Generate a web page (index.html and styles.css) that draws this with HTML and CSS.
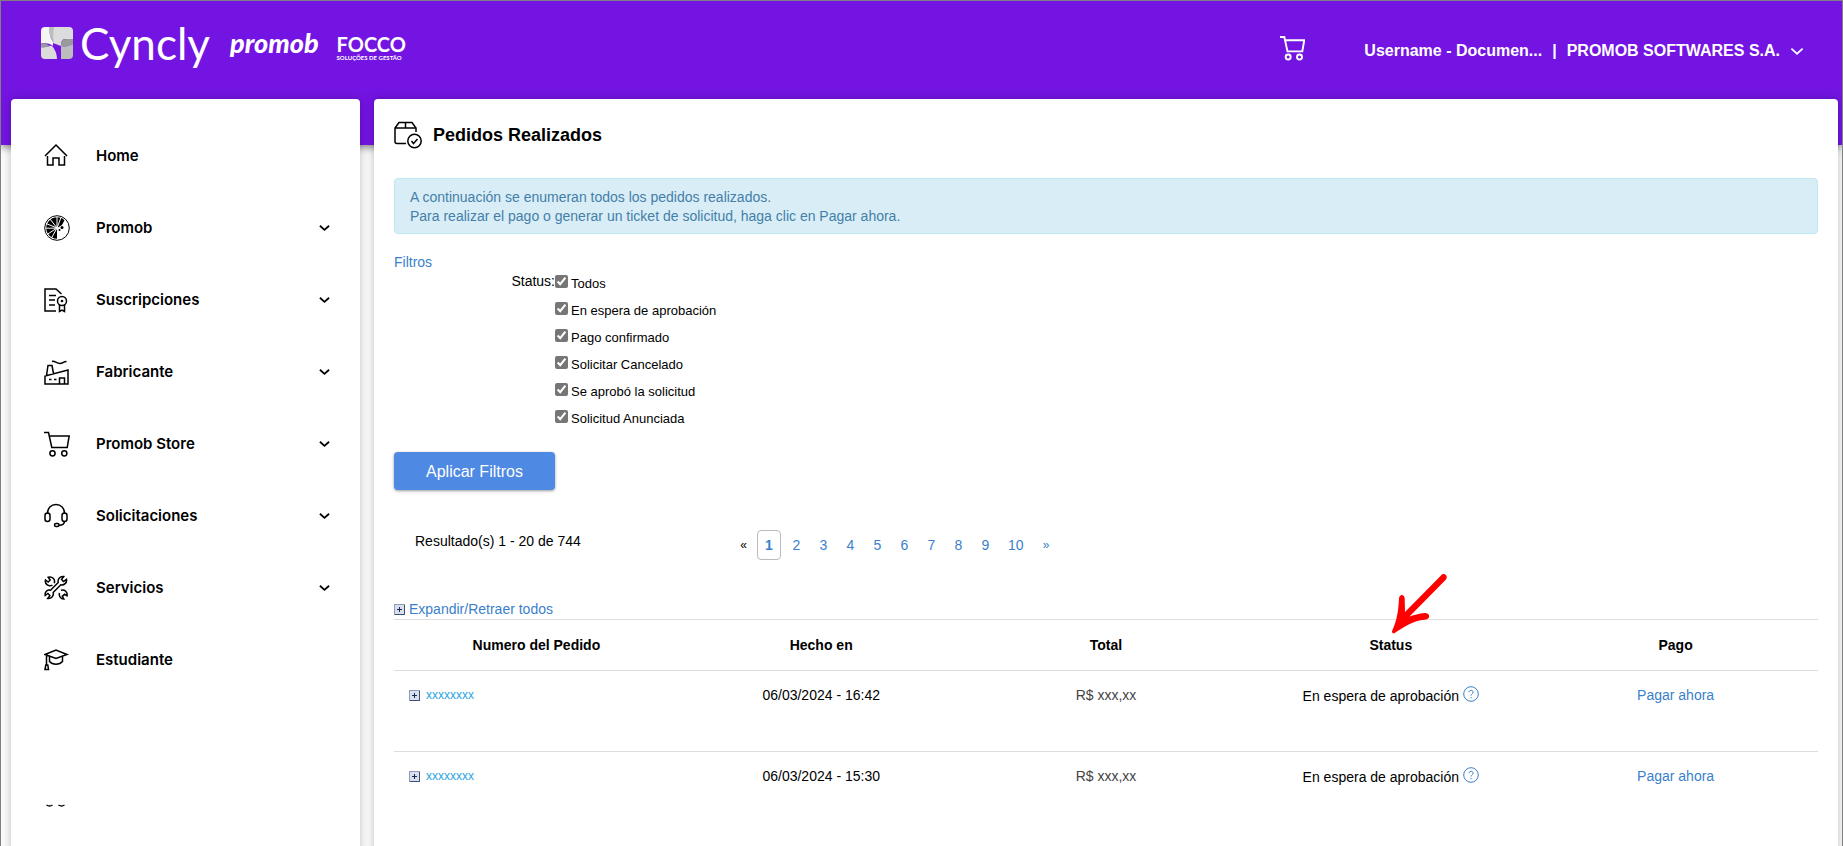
FILE: index.html
```
<!DOCTYPE html>
<html lang="es">
<head>
  <meta charset="UTF-8">
  <meta name="viewport" content="width=device-width, initial-scale=1">
  <title>Pedidos Realizados</title>
  <link rel="stylesheet" href="styles.css">
</head>
<body>
<svg class="sprite" width="0" height="0" aria-hidden="true">
  <symbol id="chevron" viewBox="0 0 12 8"><path d="M1 1.5l5 4.5 5-4.5"/></symbol>
  <symbol id="cart" viewBox="0 0 26 26"><path d="M0 1.5h4.5l3.3 15h15.4l2-11.5H5.5"/><circle cx="8.5" cy="22.3" r="2.6"/><circle cx="20.3" cy="22.3" r="2.6"/></symbol>
  <symbol id="plus" viewBox="0 0 11 11"><rect x=".5" y=".5" width="10" height="10" fill="#d9dfee" stroke="#8e9cb5"/><path d="M1 10.5h9.5V1" fill="none" stroke="#3f4f73"/><path d="M5.5 3v5M3 5.5h5" stroke="#1d2a4d"/></symbol>
  <symbol id="help" viewBox="0 0 16 16"><circle cx="8" cy="8" r="7.3"/><path d="M6 6.3c0-2.7 4.1-2.6 4.1-.1C10.100 7.700 8 7.800 8 9.600M8 11v1.200"/></symbol>
</svg>
<div class="page">
  <header class="header">
    <div class="brands">
      <a class="brand-cyncly" href="#">
        <svg class="mark" viewBox="0 0 32 32" aria-hidden="true">
          <path fill="#dcdcdc" d="M12 0H28a4 4 0 0 1 4 4v8h-8c-3 0-4 3-4 7l-8-3z"/>
          <path fill="#f5f5f5" d="M4 0h5c-1 6 0 11 3 15v4c-2-2-5-3-12-3V4a4 4 0 0 1 4-4z"/>
          <path fill="#bdbdbd" d="M8 0h5c-1 6-1 11 0 16-3-3-5-9-5-16z"/>
          <path fill="#9a9a9a" d="M20 19c0-4 1-7 5-7h7v5c-4 2-8 3-12 2zM0 16c4 0 6 1 9 3l-9 2z"/>
          <path fill="#dcdcdc" d="M0 20.500c3 0 6-.500 10.500-2 3 3 5.500 8 5.500 13.500H4a4 4 0 0 1-4-4z"/>
          <path fill="#bdbdbd" d="M20 19c4 1 8 0 12-2v11a4 4 0 0 1-4 4h-8z"/>
        </svg>
        <span>Cyncly</span>
      </a>
      <a class="brand-promob" href="#">promob</a>
      <a class="brand-focco" href="#">FOCCO<small>SOLUÇÕES DE GESTÃO</small></a>
    </div>
    <a class="header-cart" href="#" aria-label="Carrito"><svg><use href="#cart"/></svg></a>
    <button class="account" type="button">
      <span>Username - Documen...</span><span>|</span><span>PROMOB SOFTWARES S.A.</span>
      <svg aria-hidden="true"><use href="#chevron"/></svg>
    </button>
  </header>

  <div class="layout">
    <nav class="sidebar">
      <a class="item" href="#">
        <svg class="icon" viewBox="0 0 26 26"><path d="M1 13L12 2l11 11M3.500 13v9h5.500v-7h6v7h5.500v-9"/></svg>
        <span>Home</span>
      </a>
      <button class="item" type="button">
        <svg class="icon" viewBox="0 0 26 26"><circle cx="13" cy="13" r="12.300" stroke-width="1"/><path class="solid" d="M13 13V23.800A10.800 10.800 0 1 1 20.500 5.200L18 10z"/><path class="cut" d="M13 13V2M13 13L6 4M13 13L2 8.500M13 13.200H2M13 13L3 19.500M13 13L7.500 23M13 13L17 2.500"/><circle class="solid" cx="18" cy="12.500" r="1.500"/><circle class="solid" cx="15.500" cy="15" r="1"/></svg>
        <span>Promob</span><svg class="chevron"><use href="#chevron"/></svg>
      </button>
      <button class="item" type="button">
        <svg class="icon" viewBox="0 0 26 26"><path d="M12 24H1V2h11l5.500 5M5 8.500h7M5 13h6M5 18h6M15.500 18v6.500l2.500-1.500 2.500 1.500V18"/><circle cx="18" cy="14" r="4.500"/><circle cx="18" cy="14" r=".6"/></svg>
        <span>Suscripciones</span><svg class="chevron"><use href="#chevron"/></svg>
      </button>
      <button class="item" type="button">
        <svg class="icon" viewBox="0 0 26 26"><path d="M1 25v-8l23-6v14zM2.500 16.500L4 6.500h4l1.500 8M15.500 25v-6h5v6M5 20.500h2.500M10 20.500h2.500M8 2.500c3-1 4 2 8 2 3 0 3-2 6.500-2"/></svg>
        <span>Fabricante</span><svg class="chevron"><use href="#chevron"/></svg>
      </button>
      <button class="item" type="button">
        <svg class="icon"><use href="#cart"/></svg>
        <span>Promob Store</span><svg class="chevron"><use href="#chevron"/></svg>
      </button>
      <button class="item" type="button">
        <svg class="icon" viewBox="0 0 26 26"><path d="M3.500 10.500C3.500 5 7 1.500 12 1.500s8.500 3.500 8.500 9M20.500 18c0 3-2 4.300-5.500 4.300"/><rect x="1" y="10" width="5" height="8.500" rx="2.500"/><rect x="18" y="10" width="5" height="8.500" rx="2.500"/><rect x="10.500" y="20.500" width="4.500" height="3" rx="1.500"/></svg>
        <span>Solicitaciones</span><svg class="chevron"><use href="#chevron"/></svg>
      </button>
      <button class="item" type="button">
        <svg class="icon" viewBox="0 0 26 26"><path d="M8.500 10a4.600 4.600 0 0 1-7-5l2.700 2 2-2-2-2.700a4.600 4.600 0 0 1 6 6M15.500 18a4.600 4.600 0 0 0 4.300 6l-1.500-2.700 2.400-2 2.300 1.500a4.600 4.600 0 0 0-6-5.500M6.500 15.200l7.700-7.700c-.7-3.500 1.800-6.500 5.500-6l-2.200 3 2 2 3-2.200c.7 3.500-2.500 6.300-5.700 5.500l-7.600 7.700c.8 3.500-2 6.500-5.500 6l2.200-3-2-2-2.700 2c-.7-3.500 2-6 5.300-5.300z"/></svg>
        <span>Servicios</span><svg class="chevron"><use href="#chevron"/></svg>
      </button>
      <a class="item" href="#">
        <svg class="icon" viewBox="0 0 26 26"><path d="M1 7.500L12 3l11 4.500-11 4zM5.500 9.500v5c3 3.500 10 3.500 13 0v-5M2.500 8v10M1 22.500l.8-4.500h2l.7 4.500z"/></svg>
        <span>Estudiante</span>
      </a>
      <svg class="remnant" viewBox="0 0 26 4" aria-hidden="true"><path d="M2.500 1q3 2 6 0M14.500 1q3 2 6 0"/></svg>
    </nav>

    <main class="content">
      <h1 class="title">
        <svg class="icon" viewBox="0 0 28 28" aria-hidden="true"><path d="M12 22.500H3a2 2 0 0 1-2-2V7l4-5.500h13L22 7v4M1 7h21M11.500 1.500V7"/><circle cx="20.500" cy="20" r="6.700"/><path d="M17.500 20l2 2.500 4-4.500"/></svg>
        Pedidos Realizados
      </h1>
      <p class="alert">A continuación se enumeran todos los pedidos realizados.<br>Para realizar el pago o generar un ticket de solicitud, haga clic en Pagar ahora.</p>

      <a class="filters-link" href="#">Filtros</a>
      <form class="filters">
        <div class="status" role="group" aria-labelledby="status-label">
          <span class="status-label" id="status-label">Status:</span>
          <div class="options">
            <label><input type="checkbox" checked><span>Todos</span></label>
            <label><input type="checkbox" checked><span>En espera de aprobación</span></label>
            <label><input type="checkbox" checked><span>Pago confirmado</span></label>
            <label><input type="checkbox" checked><span>Solicitar Cancelado</span></label>
            <label><input type="checkbox" checked><span>Se aprobó la solicitud</span></label>
            <label><input type="checkbox" checked><span>Solicitud Anunciada</span></label>
          </div>
        </div>
        <button class="apply" type="button">Aplicar Filtros</button>
      </form>

      <div class="results">
        <p class="count">Resultado(s) 1 - 20 de 744</p>
        <nav class="pager">
          <span class="edge">«</span>
          <a class="current" href="#">1</a>
          <a href="#">2</a>
          <a href="#">3</a>
          <a href="#">4</a>
          <a href="#">5</a>
          <a href="#">6</a>
          <a href="#">7</a>
          <a href="#">8</a>
          <a href="#">9</a>
          <a href="#">10</a>
          <a class="edge" href="#">»</a>
        </nav>
      </div>

      <a class="expand-all" href="#"><svg class="plus"><use href="#plus"/></svg>Expandir/Retraer todos</a>
      <table class="orders">
        <thead>
          <tr>
            <th>Numero del Pedido</th>
            <th>Hecho en</th>
            <th>Total</th>
            <th class="marked">Status
              <svg class="arrow" viewBox="0 0 58 62" aria-hidden="true"><path d="M3 60.500q-3-.5-1.500-3.500C6 47 7.500 37 8 25.500c.5-5 5.500-4.500 5.700 0L14 39 50 2.500c3-3.500 7.500 0 5 4L18.500 43.500c5-1.500 11-3.500 16-3.500 5.500 1 4.500 6-.5 6.700C22 47.500 13 54 3 60.500z"/></svg>
            </th>
            <th>Pago</th>
          </tr>
        </thead>
        <tbody>
          <tr>
            <td class="order"><a href="#"><svg class="plus"><use href="#plus"/></svg>xxxxxxxx</a></td>
            <td>06/03/2024 - 16:42</td>
            <td class="total">R$ xxx,xx</td>
            <td>En espera de aprobación <a class="help" href="#" aria-label="Ayuda"><svg><use href="#help"/></svg></a></td>
            <td><a href="#">Pagar ahora</a></td>
          </tr>
          <tr>
            <td class="order"><a href="#"><svg class="plus"><use href="#plus"/></svg>xxxxxxxx</a></td>
            <td>06/03/2024 - 15:30</td>
            <td class="total">R$ xxx,xx</td>
            <td>En espera de aprobación <a class="help" href="#" aria-label="Ayuda"><svg><use href="#help"/></svg></a></td>
            <td><a href="#">Pagar ahora</a></td>
          </tr>
        </tbody>
      </table>
    </main>
  </div>
</div>
</body>
</html>
```
FILE: styles.css
```
* {
  box-sizing: border-box;
}
body {
  margin: 0;
  font: 14px/19px "Liberation Sans", Arial, sans-serif;
  color: #000;
  background: #fcfcfc;
}
a {
  color: #3a7fcb;
  text-decoration: none;
}
button {
  border: 0;
  background: none;
  font: inherit;
  cursor: pointer;
}
.sprite {
  position: absolute;
}
.page {
  display: flex;
  flex-direction: column;
  min-height: 100vh;
  border: 1px solid #808080;
  overflow: hidden;
}

/* header */
.header {
  display: flex;
  align-items: flex-start;
  height: 144px;
  padding: 0 38px 0 40px;
  background: #7414e3;
  box-shadow: 0 2px 8px rgba(0,0,0,.5);
  color: #fff;
}
.header a {
  color: #fff;
}
.brands {
  display: flex;
  align-items: flex-start;
  padding-top: 26px;
  margin-right: auto;
}
.brand-cyncly {
  display: flex;
  gap: 7px;
  font: 44px/32px Lato, sans-serif;
}
.mark {
  width: 32px;
  height: 32px;
}
.brand-promob {
  margin-left: 20px;
  font: italic 900 27px/32px Lato, sans-serif;
}
.brand-focco {
  margin: 7px 0 0 18px;
  font: 700 20px/20px Lato, sans-serif;
}
.brand-focco small {
  display: block;
  font-size: 6px;
  line-height: 8px;
}
.header-cart svg {
  display: block;
  width: 25px;
  height: 26px;
  margin: 34px 59px 0 0;
  fill: none;
  stroke: #fff;
  stroke-width: 2;
}
.account {
  display: flex;
  align-items: center;
  gap: 10px;
  padding: 40px 0 0;
  font-size: 16px;
  font-weight: 700;
  line-height: 20px;
  color: #fff;
}
.account svg {
  width: 14px;
  height: 9px;
  fill: none;
  stroke: #fff;
  stroke-width: 1.5;
}

/* panels */
.layout {
  display: flex;
  flex: 1;
  gap: 14px;
  margin-top: -46px;
  padding: 0 4px 0 10px;
}
.sidebar, .content {
  background: #fff;
  border-radius: 4px 4px 0 0;
  box-shadow: 0 0 10px rgba(0,0,0,.25);
}
.sidebar {
  flex: 0 0 349px;
  padding: 21px 30px 0 33px;
}
.content {
  flex: 1;
  padding: 20px;
}
.icon, .chevron, .remnant {
  fill: none;
  stroke: #000;
  stroke-width: 1.5;
}
.icon .solid {
  fill: #000;
  stroke: none;
}
.icon .cut {
  stroke: #fff;
  stroke-width: 1;
}
.item {
  display: flex;
  align-items: center;
  width: 100%;
  height: 72px;
  padding: 0;
  font: 600 15px/20px Inter, sans-serif;
  color: #000;
  text-align: left;
}
.item .icon {
  width: 26px;
  height: 26px;
  margin-right: 26px;
}
.chevron {
  width: 11px;
  height: 8px;
  margin-left: auto;
  stroke-width: 2;
}
.remnant {
  display: block;
  width: 26px;
  height: 4px;
  margin-top: 108px;
}

/* orders */
.title {
  display: flex;
  align-items: center;
  gap: 11px;
  margin: 0 0 27px;
  font-size: 18px;
  line-height: 32px;
}
.title .icon {
  width: 28px;
  height: 28px;
}
.alert {
  margin: 0 0 19px;
  padding: 9px 15px 7px;
  border: 1px solid #bce8f1;
  border-radius: 4px;
  background: #d9edf7;
  color: #447fa8;
}
.filters-link {
  display: block;
}
.status {
  display: flex;
}
.status-label {
  width: 161px;
  text-align: right;
}
.options label {
  display: flex;
  height: 27px;
  gap: 3px;
  font-size: 13px;
  line-height: 24px;
}
.options input {
  width: 13px;
  height: 13px;
  margin: 3px 0 0;
  accent-color: #767676;
}
.apply {
  height: 38px;
  margin-top: 18px;
  padding: 0 32px;
  border-radius: 4px;
  background: #4e89e3;
  box-shadow: 0 1px 3px rgba(0,0,0,.4);
  font-size: 16px;
  color: #fff;
}
.results {
  display: flex;
  margin: 40px 0;
}
.count {
  width: 336px;
  margin: 0;
  padding: 2px 0 0 21px;
}
.pager {
  display: flex;
  align-items: center;
}
.pager a, .pager span {
  min-width: 27px;
  padding: 4px 9px;
  line-height: 20px;
  text-align: center;
}
.pager .current {
  min-width: 24px;
  margin-right: 2px;
  padding: 4px 7px;
  border: 1px solid #bbb;
  border-radius: 4px;
  font-weight: 700;
}
.pager .edge {
  font-size: 12px;
}
.plus {
  width: 11px;
  height: 11px;
}
.expand-all {
  display: flex;
  align-items: center;
  gap: 4px;
}
.orders {
  width: 100%;
  border-collapse: collapse;
  table-layout: fixed;
}
.orders th {
  padding: 16px 0 15px;
  border-top: 1px solid #ddd;
  font-weight: 700;
}
.orders td {
  height: 81px;
  padding: 15px 0;
  border-top: 1px solid #ddd;
  text-align: center;
  vertical-align: top;
}
.orders .order {
  padding-left: 15px;
  font-size: 12px;
  text-align: left;
}
.order a {
  display: flex;
  align-items: center;
  gap: 6px;
  color: #2ba3e0;
}
.orders .total {
  color: #444;
}
.help svg {
  width: 16px;
  height: 16px;
  fill: none;
  stroke: #3a7fcb;
  vertical-align: -1px;
}
.marked {
  position: relative;
}
/* hint arrow laid over the Status heading */
.arrow {
  position: absolute;
  left: 50%;
  bottom: 35px;
  width: 58px;
  height: 62px;
  fill: #f00;
}
```
